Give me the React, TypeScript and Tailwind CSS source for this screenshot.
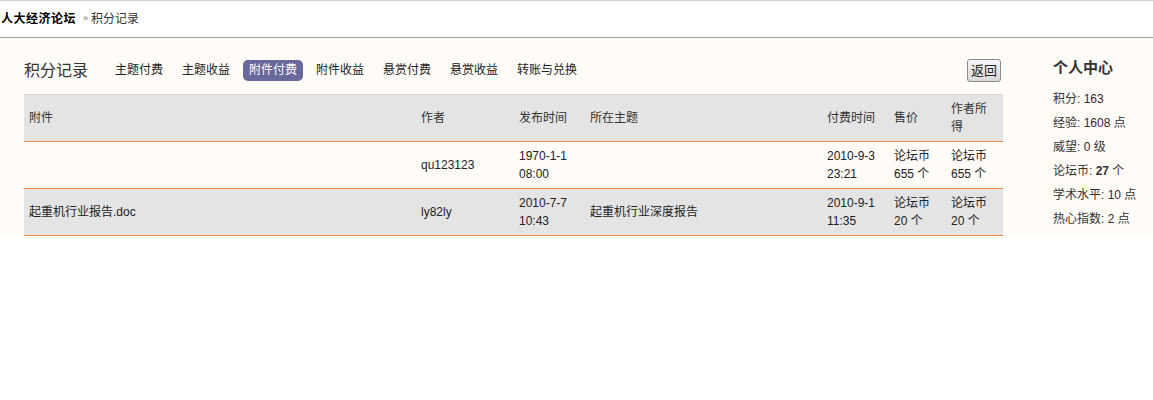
import React from "react";

const font = { fontFamily: '"Liberation Sans", "Noto Sans CJK SC", sans-serif' };

const tabs = ["主题付费", "主题收益", "附件付费", "附件收益", "悬赏付费", "悬赏收益", "转账与兑换"];

const rowCls =
  "grid grid-cols-[392px_98px_71px_237px_67px_57px_57px] h-[47px] items-center border-b border-[#ea8a3e] leading-[18px] [&>*]:px-[5px]";

export default function App() {
  return (
    <div className="w-[1153px] text-[12px] text-[#333] [font-family:'Liberation_Sans','Noto_Sans_CJK_SC',sans-serif]">
      {/* breadcrumb */}
      <div className="h-[38px] border-t border-b border-t-[#d0d0d0] border-b-[#a0a0a0] bg-white flex items-center">
        <span className="font-bold text-[#000] ml-[1px] tracking-[0.5px]">人大经济论坛</span>
        <span className="ml-[7px] text-[9px] text-[#666]">»</span>
        <span className="ml-[3px] text-[#333]">积分记录</span>
      </div>

      {/* main area */}
      <div className="bg-[#fffbf7] flex pl-[24px]">
        <div className="w-[979px] pt-[20px]">
          <div className="h-[25px] flex items-center">
            <span className="text-[16px] text-[#333] leading-[20px]">积分记录</span>
            <div className="flex items-center gap-[7px] ml-[21px]">
              {tabs.map((t) =>
                t === "附件付费" ? (
                  <span
                    key={t}
                    className="px-[6px] h-[21px] leading-[21px] rounded-[5px] bg-[#68689a] text-white"
                  >
                    {t}
                  </span>
                ) : (
                  <span key={t} className="px-[6px] h-[21px] leading-[21px] text-[#222]">
                    {t}
                  </span>
                )
              )}
            </div>
            <button className="ml-auto mr-[2px] h-[23px] px-[3px] text-[13px] leading-[21px] text-[#222] border border-[#8a8a8a] rounded-[3px] bg-gradient-to-b from-[#f6f6f6] to-[#d8d8d8]">
              返回
            </button>
          </div>

          <div className="mt-[11px] w-[979px] text-[12px]">
            <div className="border-t border-[#d4d4d4]">
              <div className={`bg-[#e4e4e4] text-[#333] ${rowCls}`}>
                <div>附件</div>
                <div>作者</div>
                <div>发布时间</div>
                <div>所在主题</div>
                <div>付费时间</div>
                <div>售价</div>
                <div>作者所<br />得</div>
              </div>
            </div>
            <div className={`text-[#222] ${rowCls}`}>
              <div></div>
              <div>qu123123</div>
              <div>1970-1-1<br />08:00</div>
              <div></div>
              <div>2010-9-3<br />23:21</div>
              <div>论坛币<br />655 个</div>
              <div>论坛币<br />655 个</div>
            </div>
            <div className={`bg-[#e4e4e4] text-[#222] ${rowCls}`}>
              <div>起重机行业报告.doc</div>
              <div>ly82ly</div>
              <div>2010-7-7<br />10:43</div>
              <div>起重机行业深度报告</div>
              <div>2010-9-1<br />11:35</div>
              <div>论坛币<br />20 个</div>
              <div>论坛币<br />20 个</div>
            </div>
          </div>
        </div>

        {/* sidebar */}
        <div className="ml-[50px] pt-[20px] flex-1" style={font}>
          <div className="text-[15px] leading-[20px] font-bold text-[#333]">个人中心</div>
          <ul className="mt-[9px] leading-[24px] text-[12px] text-[#333]">
            <li>积分: <span className="text-[#3a2626]">163</span></li>
            <li>经验: <span className="text-[#3a2626]">1608</span> 点</li>
            <li>威望: <span className="text-[#3a2626]">0</span> 级</li>
            <li>论坛币: <span className="font-bold">27</span> 个</li>
            <li>学术水平: <span className="text-[#3a2626]">10</span> 点</li>
            <li>热心指数: <span className="text-[#3a2626]">2</span> 点</li>
          </ul>
        </div>
      </div>
    </div>
  );
}
